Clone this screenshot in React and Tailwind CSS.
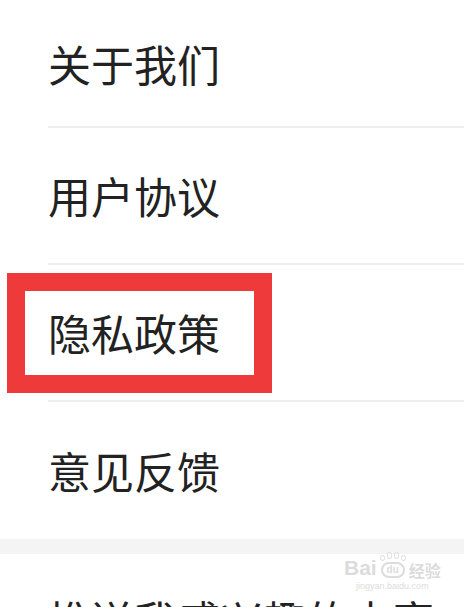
import React from 'react';

const items = ['关于我们', '用户协议', '隐私政策', '意见反馈'];

const Row = ({ label, first, last }) => (
  <div className={`pl-[48px] ${first ? 'h-[128px]' : 'h-[137px]'}`}>
    <div className={`h-full flex items-center ${last ? '' : 'border-b-2 border-[#eeeeee]'}`}>
      <span className="text-[43px] leading-none text-[#222222]">{label}</span>
    </div>
  </div>
);

const App = () => {
  return (
    <div
      className="relative w-[464px] h-[607px] overflow-hidden bg-white"
      style={{ fontFamily: '"Noto Sans CJK SC", "Noto Sans", sans-serif' }}
    >
      {items.map((label, i) => (
        <Row key={label} label={label} first={i === 0} last={i === items.length - 1} />
      ))}

      {/* section gap */}
      <div className="h-[15px] bg-[#f4f4f4]"></div>

      <div className="pl-[48px] pt-[44px] flex">
        <span className="text-[43px] leading-none text-[#222222] whitespace-nowrap">推送我感兴趣的内容</span>
      </div>

      {/* highlight box */}
      <div className="absolute left-[7px] top-[273px] w-[265px] h-[120px] border-[18px] border-[#ee3a3a]"></div>

      {/* watermark */}
      <div className="absolute left-[344px] top-[555px] flex flex-col items-center text-[#dcdcdc] pointer-events-none">
        <div className="flex items-end gap-[3px] leading-none">
          <span className="text-[21px] font-bold" style={{ fontFamily: '"Liberation Sans", sans-serif' }}>Bai</span>
          <div className="flex flex-col items-center">
            <div className="flex gap-[2px] mb-[1px]">
              <span className="w-[5px] h-[6px] rounded-full border border-[#dcdcdc]"></span>
              <span className="w-[5px] h-[7px] rounded-full border border-[#dcdcdc] -mt-[3px]"></span>
              <span className="w-[5px] h-[7px] rounded-full border border-[#dcdcdc] -mt-[3px]"></span>
              <span className="w-[5px] h-[6px] rounded-full border border-[#dcdcdc]"></span>
            </div>
            <span className="w-[24px] h-[16px] rounded-full border-2 border-[#dcdcdc] text-[10px] font-bold flex items-center justify-center" style={{ fontFamily: '"Liberation Sans", sans-serif' }}>du</span>
          </div>
          <span className="text-[16px] font-bold">经验</span>
        </div>
        <span className="text-[9px] mt-[4px] leading-none" style={{ fontFamily: '"Liberation Sans", sans-serif' }}>jingyan.baidu.com</span>
      </div>
    </div>
  );
};

export default App;
